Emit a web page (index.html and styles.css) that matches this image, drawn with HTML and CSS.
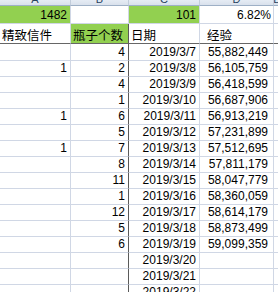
FILE: index.html
```html
<!DOCTYPE html>
<html lang="zh">
<head>
<meta charset="utf-8">
<link rel="stylesheet" href="styles.css">
</head>
<body>
<div class="sheet">
  <div class="colh"><span>A</span></div>
  <div class="colh"><span>B</span></div>
  <div class="colh"><span>C</span></div>
  <div class="colh"><span>D</span></div>
  <div class="colh"><span>E</span></div>

  <div class="c num g">1482</div>
  <div class="c"></div>
  <div class="c num g">101</div>
  <div class="c num pct">6.82%</div>
  <div class="c"></div>

  <div class="c hd txt">精致信件</div>
  <div class="c hd txt g bdr">瓶子个数</div>
  <div class="c hd txt">日期</div>
  <div class="c hd txt ind">经验</div>
  <div class="c hd"></div>

  <div class="c num"></div><div class="c num bdr">4</div><div class="c num">2019/3/7</div><div class="c num val">55,882,449</div><div class="c"></div>
  <div class="c num">1</div><div class="c num bdr">2</div><div class="c num">2019/3/8</div><div class="c num val">56,105,759</div><div class="c"></div>
  <div class="c num"></div><div class="c num bdr">4</div><div class="c num">2019/3/9</div><div class="c num val">56,418,599</div><div class="c"></div>
  <div class="c num"></div><div class="c num bdr">1</div><div class="c num">2019/3/10</div><div class="c num val">56,687,906</div><div class="c"></div>
  <div class="c num">1</div><div class="c num bdr">6</div><div class="c num">2019/3/11</div><div class="c num val">56,913,219</div><div class="c"></div>
  <div class="c num"></div><div class="c num bdr">5</div><div class="c num">2019/3/12</div><div class="c num val">57,231,899</div><div class="c"></div>
  <div class="c num">1</div><div class="c num bdr">7</div><div class="c num">2019/3/13</div><div class="c num val">57,512,695</div><div class="c"></div>
  <div class="c num"></div><div class="c num bdr">8</div><div class="c num">2019/3/14</div><div class="c num val">57,811,179</div><div class="c"></div>
  <div class="c num"></div><div class="c num bdr">11</div><div class="c num">2019/3/15</div><div class="c num val">58,047,779</div><div class="c"></div>
  <div class="c num"></div><div class="c num bdr">1</div><div class="c num">2019/3/16</div><div class="c num val">58,360,059</div><div class="c"></div>
  <div class="c num"></div><div class="c num bdr">12</div><div class="c num">2019/3/17</div><div class="c num val">58,614,179</div><div class="c"></div>
  <div class="c num"></div><div class="c num bdr">5</div><div class="c num">2019/3/18</div><div class="c num val">58,873,499</div><div class="c"></div>
  <div class="c num"></div><div class="c num bdr">6</div><div class="c num">2019/3/19</div><div class="c num val">59,099,359</div><div class="c"></div>
  <div class="c num"></div><div class="c num bdr"></div><div class="c num">2019/3/20</div><div class="c num val"></div><div class="c"></div>
  <div class="c num"></div><div class="c num bdr"></div><div class="c num">2019/3/21</div><div class="c num val"></div><div class="c"></div>
  <div class="c num"></div><div class="c num bdr"></div><div class="c num">2019/3/22</div><div class="c num val"></div><div class="c"></div>
</div>
</body>
</html>
```
FILE: styles.css
```css
html, body {
  margin: 0;
  padding: 0;
  background: #ffffff;
}
body {
  width: 278px;
  height: 292px;
  overflow: hidden;
}
.sheet {
  display: grid;
  grid-template-columns: 71px 58px 71px 74px 1fr;
  grid-template-rows: 6px 18px 20px 17px;
  grid-auto-rows: 16px;
  font-family: "Liberation Sans", "Noto Sans CJK SC", sans-serif;
  font-size: 12px;
  color: #000;
}
.colh {
  box-sizing: border-box;
  background: linear-gradient(#e6ecf4, #d9e1ec);
  border-right: 1px solid #c2cddb;
  border-bottom: 1px solid #9eb0c6;
  display: flex;
  align-items: flex-end;
  justify-content: center;
  overflow: hidden;
  color: #27415f;
  font-size: 11px;
}
.colh span {
  line-height: 11px;
}
.c {
  box-sizing: border-box;
  border-right: 1px solid #d0d7e5;
  border-bottom: 1px solid #d0d7e5;
  display: flex;
  align-items: flex-end;
  line-height: 14px;
  padding: 0 3px 1px 3px;
  white-space: nowrap;
  overflow: hidden;
}
.num {
  justify-content: flex-end;
}
.val {
  padding-right: 5px;
}
.pct {
  padding-right: 2px;
}
.g {
  background: #92d050;
}
.bdr {
  border-right-color: #5a5a5a;
}
.hd {
  border-bottom-color: #666666;
}
.txt {
  font-family: "Noto Sans CJK SC", sans-serif;
  font-size: 12.5px;
  line-height: 16px;
  padding-left: 2px;
  padding-bottom: 0;
}
.ind {
  padding-left: 7px;
}
```
